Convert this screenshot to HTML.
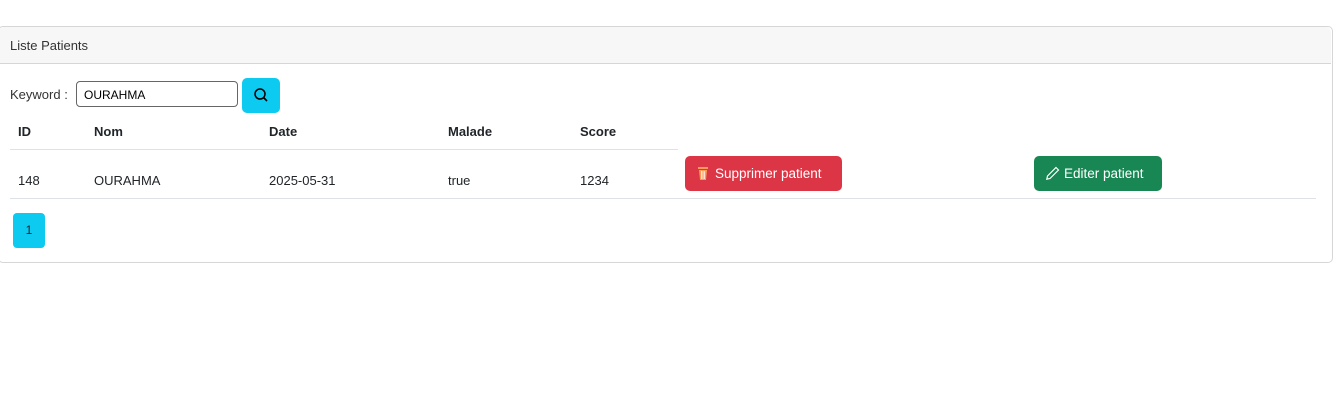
<!DOCTYPE html>
<html><head><meta charset="utf-8"><style>
body{margin:0;width:1338px;height:400px;background:#fff;font-family:"Liberation Sans",sans-serif;font-size:13px;color:#212529;position:relative;overflow:hidden}
.a{position:absolute}
.card{left:-2px;top:26px;width:1333px;height:235px;border:1px solid #d6d6d6;border-radius:5px}
.hdr{left:-1px;top:27px;width:1332px;height:36px;background:#f7f7f7;border-bottom:1px solid #d6d6d6;border-radius:5px 5px 0 0}
.th{font-weight:bold;top:124px}
.td{top:173px}
</style></head><body>
<div class="a card"></div>
<div class="a hdr"></div>
<div class="a" style="left:10px;top:38px;color:#333">Liste Patients</div>
<div class="a" style="left:10px;top:87px;color:#333">Keyword :</div>
<div class="a" style="left:76px;top:81px;width:160px;height:26px;border:1px solid #666;border-radius:4px;box-sizing:border-box;width:162px"></div>
<div class="a" style="left:84px;top:88px;font-size:12px;color:#000">OURAHMA</div>
<div class="a" style="left:242px;top:78px;width:38px;height:35px;background:#0dcaf0;border-radius:5px">
<svg width="38" height="35" viewBox="0 0 38 35"><circle cx="18" cy="16" r="5" fill="none" stroke="#000" stroke-width="1.5"/><line x1="21.5" y1="19.5" x2="25" y2="23" stroke="#000" stroke-width="1.6"/></svg></div>
<div class="a th" style="left:18px">ID</div>
<div class="a th" style="left:94px">Nom</div>
<div class="a th" style="left:269px">Date</div>
<div class="a th" style="left:448px">Malade</div>
<div class="a th" style="left:580px">Score</div>
<div class="a" style="left:10px;top:149px;width:668px;height:1px;background:#dee2e6"></div>
<div class="a td" style="left:18px">148</div>
<div class="a td" style="left:94px">OURAHMA</div>
<div class="a td" style="left:269px">2025-05-31</div>
<div class="a td" style="left:448px">true</div>
<div class="a td" style="left:580px">1234</div>
<div class="a" style="left:685px;top:156px;width:157px;height:35px;background:#dc3545;border-radius:5px;color:#fff;line-height:35px;font-size:13.5px">
<svg class="a" style="left:12px;top:10px" width="12" height="15" viewBox="0 0 12 15"><rect x="1" y="1" width="10" height="2" fill="#fd9a5a"/><path d="M2 4h8l-1 10H3z" fill="#fd9a5a"/><path d="M4.5 5v8M6 5v8M7.5 5v8" stroke="#fff" stroke-width=".7"/></svg>
<span class="a" style="left:30px">Supprimer patient</span></div>
<div class="a" style="left:1034px;top:156px;width:128px;height:35px;background:#198754;border-radius:5px;color:#fff;line-height:35px;font-size:13.5px">
<svg class="a" style="left:11px;top:10px" width="15" height="15" viewBox="0 0 15 15"><path d="M11 1.5l2.5 2.5L5 12.5 1.8 13.2 2.5 10z" fill="none" stroke="#fff" stroke-width="1.2"/></svg>
<span class="a" style="left:30px">Editer patient</span></div>
<div class="a" style="left:10px;top:198px;width:1306px;height:1px;background:#dee2e6"></div>
<div class="a" style="left:13px;top:213px;width:32px;height:35px;background:#0dcaf0;border-radius:4px;text-align:center;line-height:35px;font-size:12px">1</div>
</body></html>
